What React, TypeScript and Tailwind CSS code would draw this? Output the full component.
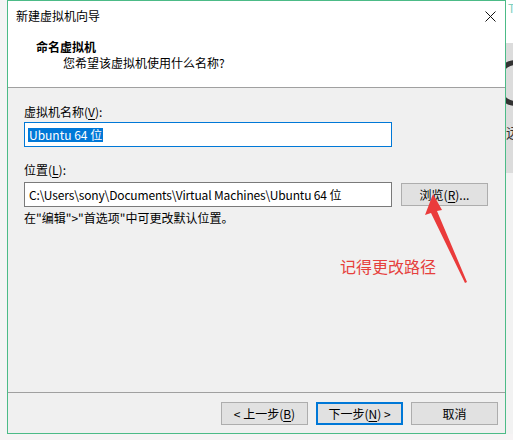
const font = {
  fontFamily: '"Noto Sans CJK SC", "Noto Sans", sans-serif',
};

type WinButtonProps = {
  children: React.ReactNode;
  primary?: boolean;
  className?: string;
};

const WinButton = ({ children, primary, className = "" }: WinButtonProps) => (
  <div
    className={`flex h-[23px] w-[87px] items-center justify-center bg-[#e1e1e1] text-[12px] leading-none text-black ${
      primary ? "border-2 border-[#0078d7]" : "border border-[#adadad]"
    } ${className}`}
  >
    {children}
  </div>
);

const Key = ({ children }: { children: React.ReactNode }) => (
  <span className="underline underline-offset-2">{children}</span>
);

export default function App() {
  return (
    <div
      className="relative flex h-[440px] w-[513px] flex-col overflow-hidden bg-[#f7f7f7]"
      style={font}
    >
      <div className="flex h-[434px]">
        {/* desktop peeking out on the left */}
        <div className="w-[7px] bg-[#f4f4f4]" />

        {/* wizard window */}
        <div className="flex w-[499px] flex-col border border-[#4cbb87] bg-[#f0f0f0]">
          <div className="flex h-[86px] flex-col bg-white">
            <div className="flex h-[29px] items-center justify-between pl-[8px] pr-[9px] text-[12px] text-black">
              <span>新建虚拟机向导</span>
              <svg width="11" height="11" viewBox="0 0 11 11" className="mt-px">
                <path d="M0.5 0.5 L10.5 10.5 M10.5 0.5 L0.5 10.5" stroke="#111" strokeWidth="1" />
              </svg>
            </div>
            <div className="flex flex-col pl-[28px] pt-[9px] text-[12px] leading-[16px] text-black">
              <span className="font-bold">命名虚拟机</span>
              <span className="pl-[27px]">您希望该虚拟机使用什么名称?</span>
            </div>
          </div>
          <div className="h-px bg-[#a0a0a0]" />

          {/* form */}
          <div className="relative flex flex-1 flex-col pl-[16px] pt-[16px] text-[12px] leading-[16px] text-black">
            <span>
              虚拟机名称(<Key>V</Key>):
            </span>
            <div className="mt-[2px] flex h-[25px] w-[368px] items-center border border-[#0078d7] bg-white pl-[3px]">
              <span className="bg-[#0078d7] px-px leading-[14px] text-white">Ubuntu 64 位</span>
            </div>

            <span className="mt-[15px]">
              位置(<Key>L</Key>):
            </span>
            <div className="mt-[4px] flex items-center">
              <div className="flex h-[25px] w-[368px] items-center border border-[#7a7a7a] bg-white pl-[4px] tracking-[-0.15px]">
                C:\Users\sony\Documents\Virtual Machines\Ubuntu 64 位
              </div>
              <WinButton className="ml-[9px]">
                浏览(<Key>R</Key>)...
              </WinButton>
            </div>
            <span className="mt-[3px]">在"编辑"&gt;"首选项"中可更改默认位置。</span>

            {/* red note with arrow */}
            <span className="absolute left-[332px] top-[168px] text-[16px] leading-[20px] text-[#e6403c]">
              记得更改路径
            </span>
            <svg
              className="absolute left-[412px] top-[104px]"
              width="50"
              height="95"
              viewBox="0 0 50 95"
            >
              <polygon
                points="13,2 5,23 11,21 45,91 47,90 17,19 22,18"
                fill="#ea3b3b"
              />
            </svg>
          </div>

          <div className="h-px bg-[#a0a0a0]" />
          <div className="flex h-[40px] justify-end gap-[8px] pr-[7px] pt-[9px]">
            <WinButton>
              &lt; 上一步(<Key>B</Key>)
            </WinButton>
            <WinButton primary>
              下一步(<Key>N</Key>) &gt;
            </WinButton>
            <WinButton>取消</WinButton>
          </div>
        </div>

        {/* desktop peeking out on the right */}
        <div className="flex w-[7px] flex-col overflow-hidden">
          <div className="h-[43px] bg-white pl-[2px] pt-[2px] text-[12px] leading-none text-[#7fd0c0]">
            T
          </div>
          <div className="relative h-[130px] bg-[#dcdcdc]">
            <div className="absolute -left-[10px] top-[17px] h-[46px] w-[40px] rounded-full border-[5px] border-[#333]" />
            <span className="absolute left-0 top-[82px] text-[14px] leading-none text-[#333]">远</span>
          </div>
          <div className="flex-1 bg-[#f2f2f2]" />
        </div>
      </div>
      <div className="h-[6px] bg-[#f6f3f4]" />
    </div>
  );
}
